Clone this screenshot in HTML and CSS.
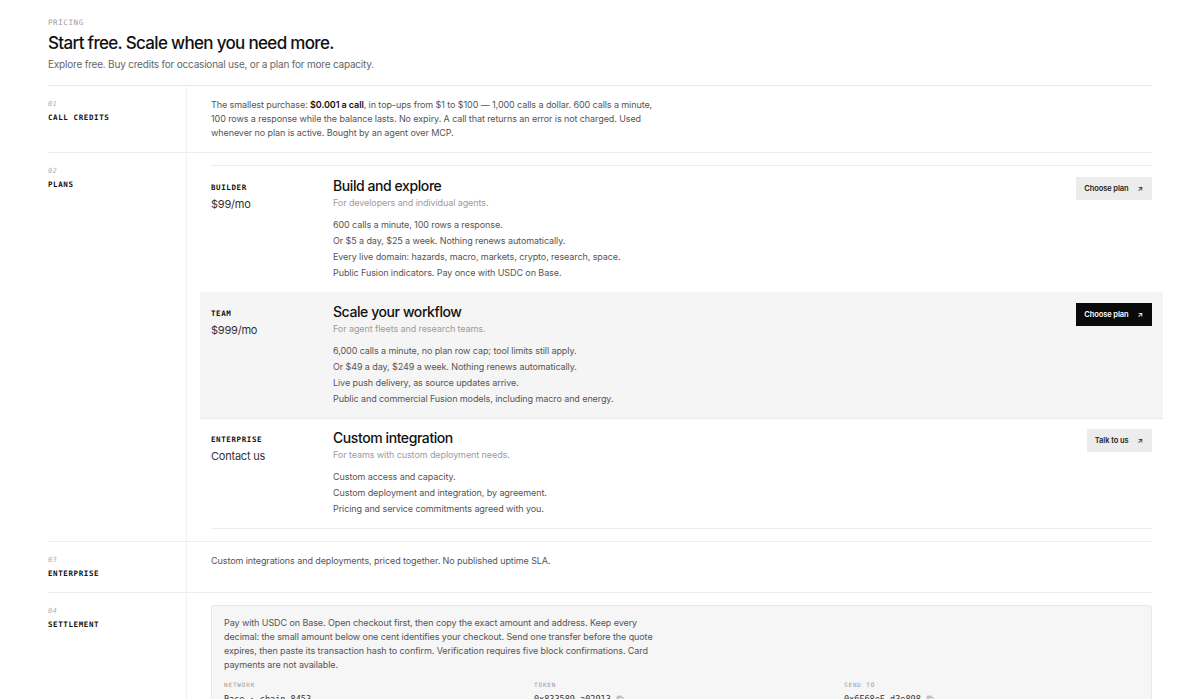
FILE: index.html
```html
<!DOCTYPE html>
<html lang="en">
<head>
<meta charset="utf-8">
<title>Pricing</title>
<link rel="stylesheet" href="styles.css">
</head>
<body>
<main class="page">
  <header class="head">
    <p class="eyebrow">PRICING</p>
    <h1 class="title">Start free. Scale when you need more.</h1>
    <p class="lede">Explore free. Buy credits for occasional use, or a plan for more capacity.</p>
  </header>

  <section class="row">
    <div class="row-label"><span class="num">01</span><span class="name">CALL CREDITS</span></div>
    <div class="row-body">
      <p class="copy">The smallest purchase: <strong>$0.001 a call</strong>, in top-ups from $1 to $100 — 1,000 calls a dollar. 600 calls a minute, 100 rows a response while the balance lasts. No expiry. A call that returns an error is not charged. Used whenever no plan is active. Bought by an agent over MCP.</p>
    </div>
  </section>

  <section class="row">
    <div class="row-label"><span class="num">02</span><span class="name">PLANS</span></div>
    <div class="row-body">
      <div class="plans">
        <article class="plan">
          <div class="plan-meta"><span class="plan-name">BUILDER</span><span class="plan-price">$99/mo</span></div>
          <div class="plan-main">
            <h2 class="plan-title">Build and explore</h2>
            <p class="plan-sub">For developers and individual agents.</p>
            <ul class="features">
              <li>600 calls a minute, 100 rows a response.</li>
              <li>Or $5 a day, $25 a week. Nothing renews automatically.</li>
              <li>Every live domain: hazards, macro, markets, crypto, research, space.</li>
              <li>Public Fusion indicators. Pay once with USDC on Base.</li>
            </ul>
          </div>
          <a class="btn" href="#">Choose plan <span class="arrow">↗</span></a>
        </article>
        <article class="plan plan-featured">
          <div class="plan-meta"><span class="plan-name">TEAM</span><span class="plan-price">$999/mo</span></div>
          <div class="plan-main">
            <h2 class="plan-title">Scale your workflow</h2>
            <p class="plan-sub">For agent fleets and research teams.</p>
            <ul class="features">
              <li>6,000 calls a minute, no plan row cap; tool limits still apply.</li>
              <li>Or $49 a day, $249 a week. Nothing renews automatically.</li>
              <li>Live push delivery, as source updates arrive.</li>
              <li>Public and commercial Fusion models, including macro and energy.</li>
            </ul>
          </div>
          <a class="btn btn-dark" href="#">Choose plan <span class="arrow">↗</span></a>
        </article>
        <article class="plan">
          <div class="plan-meta"><span class="plan-name">ENTERPRISE</span><span class="plan-price">Contact us</span></div>
          <div class="plan-main">
            <h2 class="plan-title">Custom integration</h2>
            <p class="plan-sub">For teams with custom deployment needs.</p>
            <ul class="features">
              <li>Custom access and capacity.</li>
              <li>Custom deployment and integration, by agreement.</li>
              <li>Pricing and service commitments agreed with you.</li>
            </ul>
          </div>
          <a class="btn" href="#">Talk to us <span class="arrow">↗</span></a>
        </article>
      </div>
    </div>
  </section>

  <section class="row">
    <div class="row-label"><span class="num">03</span><span class="name">ENTERPRISE</span></div>
    <div class="row-body">
      <p class="copy">Custom integrations and deployments, priced together. No published uptime SLA.</p>
    </div>
  </section>

  <section class="row">
    <div class="row-label"><span class="num">04</span><span class="name">SETTLEMENT</span></div>
    <div class="row-body">
      <div class="settle">
        <p class="settle-copy">Pay with USDC on Base. Open checkout first, then copy the exact amount and address. Keep every decimal: the small amount below one cent identifies your checkout. Send one transfer before the quote expires, then paste its transaction hash to confirm. Verification requires five block confirmations. Card payments are not available.</p>
        <dl class="facts">
          <div class="fact"><dt>NETWORK</dt><dd>Base · chain 8453</dd></div>
          <div class="fact"><dt>TOKEN</dt><dd>0x833589…a02913 <svg class="copy-ico" viewBox="0 0 10 10" width="8" height="8"><rect x="3" y="3" width="6" height="6" rx="1" fill="none" stroke="#999" stroke-width="1"/><path d="M1.5 7V2a.5.5 0 0 1 .5-.5h5" fill="none" stroke="#999" stroke-width="1"/></svg></dd></div>
          <div class="fact"><dt>SEND TO</dt><dd>0x6F68eF…d3e898 <svg class="copy-ico" viewBox="0 0 10 10" width="8" height="8"><rect x="3" y="3" width="6" height="6" rx="1" fill="none" stroke="#999" stroke-width="1"/><path d="M1.5 7V2a.5.5 0 0 1 .5-.5h5" fill="none" stroke="#999" stroke-width="1"/></svg></dd></div>
        </dl>
      </div>
    </div>
  </section>
</main>
</body>
</html>
```

FILE: styles.css
```css
* { box-sizing: border-box; }
html, body { margin: 0; padding: 0; background: #fff; }
body {
  font-family: Inter, "Noto Sans", sans-serif;
  color: #111;
  -webkit-font-smoothing: antialiased;
}
p, h1, h2, ul, dl, dd { margin: 0; padding: 0; }
ul { list-style: none; }

.page { padding: 17px 48px 0; }

.head { padding-bottom: 13px; border-bottom: 1px solid #e9e9e9; }
.eyebrow {
  font-family: "DejaVu Sans Mono", monospace;
  font-size: 7.5px; line-height: 12px; letter-spacing: 0.08em;
  color: #9a9a9a;
}
.title {
  margin-top: 2px;
  font-size: 17px; line-height: 24px; font-weight: 500;
  letter-spacing: -0.04em; color: #111;
}
.lede {
  margin-top: 1px;
  font-size: 10px; line-height: 16px; color: #666;
  letter-spacing: -0.02em;
}

.row {
  display: grid;
  grid-template-columns: 139px 1fr;
  border-bottom: 1px solid #eeeeee;
}
.row-label {
  padding: 12px 0;
  border-right: 1px solid #f1f1f1;
  display: flex; flex-direction: column; gap: 2px;
}
.num {
  font-family: "DejaVu Sans Mono", monospace;
  font-style: italic; font-size: 7px; line-height: 12px;
  color: #b0b0b0; letter-spacing: 0.05em;
}
.name {
  font-family: "DejaVu Sans Mono", monospace;
  font-weight: 700; font-size: 7.5px; line-height: 12px;
  letter-spacing: 0.08em; color: #111;
}
.row-body { padding: 12px 0 12px 24px; }

.copy {
  max-width: 448px;
  font-size: 9px; line-height: 14px; color: #555;
  letter-spacing: -0.01em;
}
.copy strong { color: #111; font-weight: 600; }

.plans { border-top: 1px solid #ececec; border-bottom: 1px solid #ececec; }
.plan {
  display: grid;
  grid-template-columns: 122px 1fr auto;
  padding: 10px 0 11px;
}
.plan-featured {
  background: #f5f5f5;
  margin: 0 -11px;
  padding: 10px 11px 11px;
  box-shadow: 0 1px 0 #ececec;
}
.plan-meta { display: flex; flex-direction: column; gap: 2px; padding-top: 6px; }
.plan-name {
  font-family: "DejaVu Sans Mono", monospace;
  font-weight: 700; font-size: 7.5px; line-height: 12px;
  letter-spacing: 0.08em; color: #111;
}
.plan-price { font-size: 11px; line-height: 16px; color: #333; letter-spacing: -0.02em; }
.plan-title { font-size: 14px; line-height: 20px; font-weight: 500; letter-spacing: -0.03em; color: #111; }
.plan-sub { font-size: 9px; line-height: 14px; color: #9c9c9c; letter-spacing: -0.01em; }
.features { margin-top: 7px; }
.features li { font-size: 9px; line-height: 16px; color: #555; letter-spacing: -0.01em; }

.btn {
  align-self: start;
  margin-top: 1px;
  display: inline-flex; align-items: center; gap: 9px;
  height: 23px; padding: 0 9px 0 8px;
  background: #ececec; color: #222;
  font-size: 7.5px; font-weight: 600; text-decoration: none;
  letter-spacing: -0.01em;
}
.btn-dark { background: #0a0a0a; color: #fff; }
.arrow { font-size: 7px; }

.settle {
  background: #f6f6f6;
  border: 1px solid #e8e8e8;
  border-radius: 3px;
  padding: 10px 12px 20px;
}
.settle-copy {
  max-width: 432px;
  font-size: 9px; line-height: 14px; color: #555;
  letter-spacing: -0.01em;
}
.facts {
  margin-top: 8px;
  display: grid; grid-template-columns: 310px 310px 1fr;
}
.fact dt {
  font-family: "DejaVu Sans Mono", monospace;
  font-size: 6px; line-height: 10px; letter-spacing: 0.14em; color: #999;
}
.fact dd {
  margin-top: 3px;
  font-family: "DejaVu Sans Mono", monospace;
  font-size: 8.5px; line-height: 12px; color: #333;
  display: flex; align-items: center; gap: 5px;
}
.copy-ico { display: block; }
```
